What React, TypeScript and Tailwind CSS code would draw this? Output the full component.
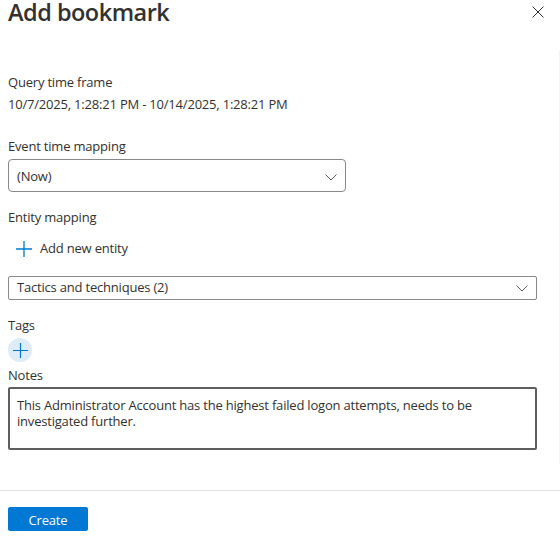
function Chevron() {
  return (
    <svg width="12" height="7" viewBox="0 0 12 7" fill="none">
      <path d="M0.5 0.5L6 6L11.5 0.5" stroke="#605e5c" strokeWidth="1" />
    </svg>
  );
}

function Plus({ size }: { size: number }) {
  return (
    <svg width={size} height={size} viewBox="0 0 16 16" fill="none">
      <path d="M8 0V16M0 8H16" stroke="#0078d4" strokeWidth="1.3" />
    </svg>
  );
}

export default function App() {
  return (
    <div className="relative w-[560px] h-[541px] bg-white overflow-hidden font-['Open_Sans',sans-serif] text-[#323130] text-[13px] tracking-[-0.2px]">
      {/* Header */}
      <div className="flex items-center justify-between pl-2 pr-4 h-[24px]">
        <h1 className="text-[23.5px] leading-[24px] font-semibold tracking-[-0.5px]">Add bookmark</h1>
        <button className="w-[12px] h-[12px] mt-[-1px]">
          <svg width="12" height="12" viewBox="0 0 12 12" fill="none">
            <path d="M0.5 0.5L11.5 11.5M11.5 0.5L0.5 11.5" stroke="#323130" strokeWidth="1" />
          </svg>
        </button>
      </div>

      <div className="flex flex-col px-2">
        <div className="mt-[48px] leading-[20px]">Query time frame</div>
        <div className="mt-[2px] leading-[20px]">10/7/2025, 1:28:21 PM - 10/14/2025, 1:28:21 PM</div>

        <div className="mt-[22px] leading-[20px]">Event time mapping</div>
        <div className="mt-[3px] w-[338px] h-[33px] border border-[#8a8886] rounded-[4px] flex items-center justify-between pl-2 pr-[8px] pt-[3px]">
          <span>(Now)</span>
          <Chevron />
        </div>

        <div className="mt-[15px] leading-[20px]">Entity mapping</div>
        <div className="mt-[9px] h-[26px] flex items-center gap-[8px] pl-2">
          <Plus size={16} />
          <span>Add new entity</span>
        </div>

        <div className="mt-[14px] w-[529px] h-[24px] border border-[#8a8886] rounded-[2px] flex items-center justify-between pl-2 pr-[8px]">
          <span>Tactics and techniques (2)</span>
          <Chevron />
        </div>

        <div className="mt-[15px] leading-[20px]">Tags</div>
        <div className="mt-[3px] w-[24px] h-[24px] rounded-full bg-[#deecf9] flex items-center justify-center">
          <Plus size={15} />
        </div>

        <div className="mt-[3px] leading-[20px]">Notes</div>
        <div className="mt-[2px] w-[529px] h-[63px] border-2 border-[#605e5c] rounded-[2px] px-[7px] pt-[8px] leading-[16px]">
          This Administrator Account has the highest failed logon attempts, needs to be investigated further.
        </div>
      </div>

      {/* Footer */}
      <div className="mt-[40px] border-t border-[#e1dfdd] px-2 pt-[16px]">
        <button className="w-[80px] h-[24px] bg-[#0078d4] rounded-[2px] text-white text-[13px] leading-[24px] pt-[1px]">
          Create
        </button>
      </div>

      <div className="absolute right-0 top-[50px] w-[1px] h-[415px] bg-[#f5f5f5]" />
    </div>
  );
}
